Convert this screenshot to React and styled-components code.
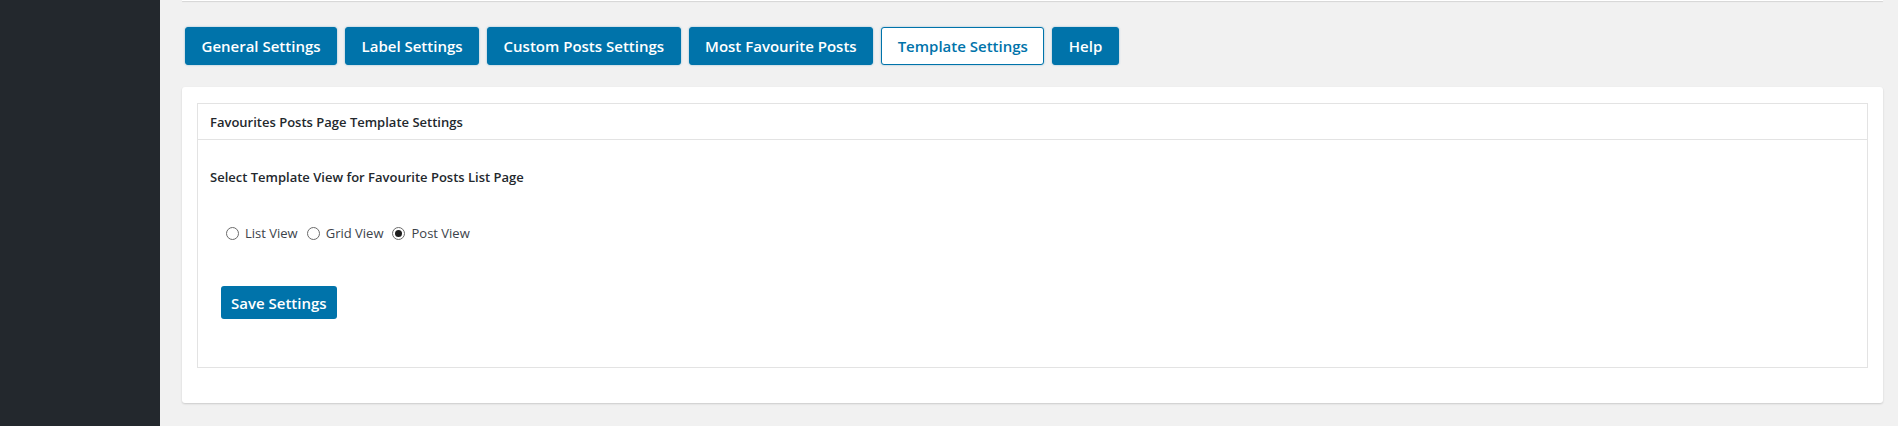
import React from 'react';
import styled, { createGlobalStyle } from 'styled-components';

const GlobalStyle = createGlobalStyle`
  html, body {
    margin: 0;
    padding: 0;
    background: #f1f1f1;
    font-family: 'Open Sans', 'Noto Sans', sans-serif;
    color: #23282d;
  }
  * { box-sizing: border-box; }
`;

const Layout = styled.div`
  display: flex;
  min-height: 426px;
`;

const Sidebar = styled.aside`
  width: 160px;
  flex-shrink: 0;
  background: #23282d;
`;

const Main = styled.main`
  flex: 1;
  padding: 0 15px 0 22px;
  display: flex;
  flex-direction: column;
`;

const TopStrip = styled.div`
  height: 1px;
  background: #fff;
  box-shadow: 0 1px 1px rgba(0, 0, 0, 0.13);
`;

const Tabs = styled.nav`
  display: flex;
  gap: 8px;
  margin: 26px 0 0 3px;
`;

const Tab = styled.button`
  height: 38px;
  padding: 0 15.5px;
  border-radius: 3px;
  border: 1px solid #0073aa;
  background: ${({ $active }) => ($active ? '#fff' : '#0073aa')};
  color: ${({ $active }) => ($active ? '#0073aa' : '#fff')};
  box-shadow: 0 0 2px rgba(0, 115, 170, 0.45);
  font: 600 15px 'Open Sans', sans-serif;
  cursor: pointer;
  white-space: nowrap;
`;

const Card = styled.section`
  margin-top: 22px;
  background: #fff;
  border-radius: 3px;
  box-shadow: 0 1px 2px rgba(0, 0, 0, 0.16);
  padding: 16px 15px 35px;
`;

const Panel = styled.div`
  border: 1px solid #e3e3e3;
`;

const PanelHeader = styled.h3`
  margin: 0;
  height: 36px;
  display: flex;
  align-items: center;
  padding: 0 12px;
  border-bottom: 1px solid #e3e3e3;
  font: 600 13px 'Open Sans', sans-serif;
  color: #23282d;
`;

const PanelBody = styled.div`
  padding: 27px 12px 48px;
`;

const FieldLabel = styled.p`
  margin: 0;
  font: 600 13px/20px 'Open Sans', sans-serif;
  color: #23282d;
`;

const RadioRow = styled.div`
  display: flex;
  align-items: center;
  margin: 36px 0 0 16px;
  height: 20px;
`;

const RadioLabel = styled.label`
  display: flex;
  align-items: center;
  gap: 6px;
  margin-right: 9px;
  font: 400 13px 'Open Sans', sans-serif;
  color: #3c434a;
`;

const Radio = styled.input.attrs({ type: 'radio' })`
  appearance: none;
  margin: 0;
  width: 13px;
  height: 13px;
  border-radius: 50%;
  border: 1px solid #6b6b6b;
  background: #fff;
  position: relative;
  &:checked::after {
    content: '';
    position: absolute;
    left: 2px;
    top: 2px;
    width: 7px;
    height: 7px;
    border-radius: 50%;
    background: #1e1e1e;
  }
`;

const SaveButton = styled.button`
  margin: 43px 0 0 11px;
  height: 33px;
  padding: 0 10px;
  border: 0;
  border-radius: 3px;
  background: #0073aa;
  color: #fff;
  font: 600 15px 'Open Sans', sans-serif;
  cursor: pointer;
`;

const tabs = [
  'General Settings',
  'Label Settings',
  'Custom Posts Settings',
  'Most Favourite Posts',
  'Template Settings',
  'Help',
];

const views = ['List View', 'Grid View', 'Post View'];

const App = () => {
  const [view, setView] = React.useState('Post View');
  return (
    <>
      <GlobalStyle />
      <Layout>
        <Sidebar />
        <Main>
          <TopStrip />
          <Tabs>
            {tabs.map((t) => (
              <Tab key={t} $active={t === 'Template Settings'}>{t}</Tab>
            ))}
          </Tabs>
          <Card>
            <Panel>
              <PanelHeader>Favourites Posts Page Template Settings</PanelHeader>
              <PanelBody>
                <FieldLabel>Select Template View for Favourite Posts List Page</FieldLabel>
                <RadioRow>
                  {views.map((v) => (
                    <RadioLabel key={v}>
                      <Radio
                        name="template"
                        checked={view === v}
                        onChange={() => setView(v)}
                      />
                      {v}
                    </RadioLabel>
                  ))}
                </RadioRow>
                <div>
                  <SaveButton>Save Settings</SaveButton>
                </div>
              </PanelBody>
            </Panel>
          </Card>
        </Main>
      </Layout>
    </>
  );
};

export default App;
